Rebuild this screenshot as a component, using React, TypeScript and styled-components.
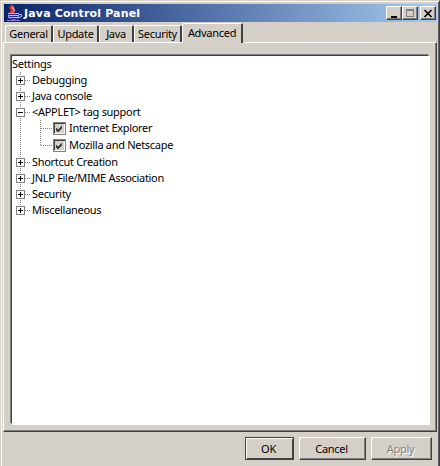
import React from "react";
import styled, { createGlobalStyle } from "styled-components";

const GlobalStyle = createGlobalStyle`
  html, body {
    margin: 0;
    padding: 0;
    background: #d4d0c8;
  }
  body {
    font-family: "Noto Sans", "Liberation Sans", sans-serif;
    font-size: 11px;
    letter-spacing: -0.3px;
    color: #000;
  }
`;

const Frame = styled.div`
  box-sizing: border-box;
  width: 440px;
  height: 466px;
  display: flex;
  flex-direction: column;
  background: #d4d0c8;
  padding: 3px 2px 0 3px;
  border-style: solid;
  border-width: 1px 1px 0 1px;
  border-color: #d4d0c8 #404040 transparent #d4d0c8;
  box-shadow: inset 1px 1px 0 #fff, inset -1px 0 0 #606060;
`;

const TitleBar = styled.div`
  height: 18px;
  flex: none;
  display: flex;
  align-items: center;
  padding: 0 1px 0 2px;
  background: linear-gradient(90deg, #0a246a, #a6caf0);
`;

const TitleText = styled.div`
  font-family: "DejaVu Sans", sans-serif;
  font-weight: 700;
  font-size: 11px;
  letter-spacing: 0.15px;
  color: #fff;
  margin-left: 2px;
  flex: 1;
`;

const CaptionButton = styled.button<{ $gap?: number }>`
  box-sizing: border-box;
  width: 16px;
  height: 14px;
  padding: 0;
  margin-left: ${(p) => p.$gap ?? 0}px;
  display: flex;
  align-items: center;
  justify-content: center;
  background: #d4d0c8;
  border-style: solid;
  border-width: 1px;
  border-color: #fff #404040 #404040 #fff;
  box-shadow: inset -1px -1px 0 #808080;
`;

const TabStrip = styled.div`
  height: 20px;
  flex: none;
  display: flex;
  align-items: flex-end;
  padding-left: 1px;
`;

const Tab = styled.div<{ $active?: boolean; $w: number }>`
  box-sizing: border-box;
  width: ${(p) => p.$w}px;
  height: ${(p) => (p.$active ? 20 : 17)}px;
  line-height: ${(p) => (p.$active ? 17 : 15)}px;
  text-align: center;
  background: #d4d0c8;
  border-style: solid;
  border-width: 1px 2px 0 1px;
  border-color: #fff #404040 transparent #fff;
  border-top-left-radius: 2px;
  border-top-right-radius: 2px;
  position: relative;
  z-index: ${(p) => (p.$active ? 1 : 0)};
  margin-bottom: ${(p) => (p.$active ? -1 : 0)}px;
`;

const TabPanel = styled.div`
  box-sizing: border-box;
  height: 390px;
  flex: none;
  margin-left: -1px;
  padding: 12px 7px 7px 7px;
  border-style: solid;
  border-width: 1px;
  border-color: #fff #404040 #404040 #fff;
  box-shadow: inset -1px -1px 0 #808080;
`;

const TreeBox = styled.div`
  box-sizing: border-box;
  height: 100%;
  background: #fff;
  border-style: solid;
  border-width: 1px;
  border-color: #404040 #fff #fff #404040;
  box-shadow: 1px 1px 0 #fff, -1px -1px 0 #808080;
`;

const Row = styled.div<{ $h?: number }>`
  height: ${(p) => p.$h ?? 16}px;
  display: flex;
  align-items: center;
  white-space: nowrap;
`;

const Label = styled.span`
  margin-bottom: 2px;
`;

const Footer = styled.div`
  flex: 1;
  display: flex;
  justify-content: flex-end;
  align-items: flex-start;
  gap: 5px;
  padding: 5px 5px 0 0;
`;

const DialogButton = styled.button<{ $w: number; $default?: boolean }>`
  box-sizing: border-box;
  width: ${(p) => p.$w}px;
  height: 23px;
  padding: 0 2px 0 0;
  font: inherit;
  letter-spacing: inherit;
  color: #000;
  background: #d4d0c8;
  border-style: solid;
  border-width: 1px;
  border-color: ${(p) =>
    p.$default ? "#404040" : "#fff #404040 #404040 #fff"};
  box-shadow: ${(p) =>
    p.$default
      ? "inset 1px 1px 0 #fff, inset -1px -1px 0 #404040"
      : "inset -1px -1px 0 #808080"};

  &:disabled {
    color: #808080;
    text-shadow: 1px 1px 0 #fff;
  }
`;

function JavaLogo() {
  return (
    <svg width="16" height="18" viewBox="0 0 16 18">
      <path d="M6 0 L3 4 L5 6 L3 9 H8 L9.5 6 L7.5 4.5 Z" fill="#e03a28" />
      <path d="M7 1.5 L6 4 L8 6 L6.5 9 L9 6.5 L8 4 Z" fill="#f4b0a0" />
      <path d="M2 9 H13 V12 C13 14 11 15.5 7.5 15.5 C4 15.5 2 14 2 12 Z" fill="#b8b8e8" />
      <path d="M2 10.5 H13 M3 12.5 H12 M4 14.5 H11" stroke="#2a2a90" fill="none" />
      <path d="M13 10.5 H15.5 V12.5 L12.5 14" stroke="#b8b8e8" fill="none" />
      <path d="M1 16.5 H14" stroke="#8080d0" />
    </svg>
  );
}

function Expander({ open, last }: { open?: boolean; last?: boolean }) {
  return (
    <svg width="20" height="16" viewBox="0 0 20 16" shapeRendering="crispEdges">
      <path
        d={last ? "M8.5 0 V4" : "M8.5 0 V16"}
        stroke="#808080"
        strokeDasharray="1 1"
      />
      <path d="M13 8.5 H19" stroke="#808080" strokeDasharray="1 1" />
      <rect x="4.5" y="4.5" width="8" height="8" fill="#fff" stroke="#808080" />
      <path d="M6 8.5 H11" stroke="#000" />
      {!open && <path d="M8.5 6 V11" stroke="#000" />}
    </svg>
  );
}

function Elbow({ h, end }: { h: number; end?: boolean }) {
  return (
    <svg width="41" height={h} viewBox={`0 0 41 ${h}`} shapeRendering="crispEdges">
      <path d={`M8.5 0 V${h}`} stroke="#808080" strokeDasharray="1 1" />
      <path d={`M28.5 0 V${end ? 9 : h}`} stroke="#808080" strokeDasharray="1 1" />
      <path d={`M29 ${end ? 9.5 : 8.5} H41`} stroke="#808080" strokeDasharray="1 1" />
    </svg>
  );
}

const CheckFrame = styled.svg`
  margin-right: 3px;
  flex: none;
`;

function Check() {
  return (
    <CheckFrame width="13" height="13" viewBox="0 0 13 13" shapeRendering="crispEdges">
      <rect x="0.5" y="0.5" width="12" height="12" fill="#d4d0c8" stroke="#808080" />
      <path d="M1.5 11.5 H11.5 V1.5" stroke="#fff" fill="none" />
      <path d="M1.5 10.5 V1.5 H11.5" stroke="#404040" fill="none" />
      <path d="M3 6 L5 8 L9 4 M3 7 L5 9 L9 5 M3 8 L5 10 L9 6" stroke="#404040" fill="none" shapeRendering="auto" />
    </CheckFrame>
  );
}

const nodes = ["Debugging", "Java console"];
const moreNodes = [
  "Shortcut Creation",
  "JNLP File/MIME Association",
  "Security",
];

export default function App() {
  return (
    <>
      <GlobalStyle />
      <Frame>
        <TitleBar>
          <JavaLogo />
          <TitleText>Java Control Panel</TitleText>
          <CaptionButton>
            <svg width="10" height="9" viewBox="0 0 10 9" shapeRendering="crispEdges">
              <path d="M2 7.5 H8 M2 8.5 H8" stroke="#000" />
            </svg>
          </CaptionButton>
          <CaptionButton>
            <svg width="10" height="9" viewBox="0 0 10 9" shapeRendering="crispEdges">
              <path d="M1.5 1.5 H8.5 V7.5 H1.5 Z" stroke="#808080" fill="none" />
              <path d="M1 .5 H9" stroke="#808080" />
            </svg>
          </CaptionButton>
          <CaptionButton $gap={2}>
            <svg width="10" height="9" viewBox="0 0 10 9">
              <path d="M1.5 1 L8.5 8 M8.5 1 L1.5 8" stroke="#000" strokeWidth="1.6" />
            </svg>
          </CaptionButton>
        </TitleBar>
        <TabStrip>
          <Tab $w={48}>General</Tab>
          <Tab $w={46}>Update</Tab>
          <Tab $w={35}>Java</Tab>
          <Tab $w={48}>Security</Tab>
          <Tab $w={61} $active>Advanced</Tab>
        </TabStrip>
        <TabPanel>
          <TreeBox>
            <Row><Label>Settings</Label></Row>
            {nodes.map((n) => (
              <Row key={n}><Expander /><Label>{n}</Label></Row>
            ))}
            <Row><Expander open /><Label>&lt;APPLET&gt; tag support</Label></Row>
            <Row><Elbow h={16} /><Check /><Label>Internet Explorer</Label></Row>
            <Row $h={18}><Elbow h={18} end /><Check /><Label>Mozilla and Netscape</Label></Row>
            {moreNodes.map((n) => (
              <Row key={n}><Expander /><Label>{n}</Label></Row>
            ))}
            <Row><Expander last /><Label>Miscellaneous</Label></Row>
          </TreeBox>
        </TabPanel>
        <Footer>
          <DialogButton $w={49} $default>OK</DialogButton>
          <DialogButton $w={67}>Cancel</DialogButton>
          <DialogButton $w={61} disabled>Apply</DialogButton>
        </Footer>
      </Frame>
    </>
  );
}
